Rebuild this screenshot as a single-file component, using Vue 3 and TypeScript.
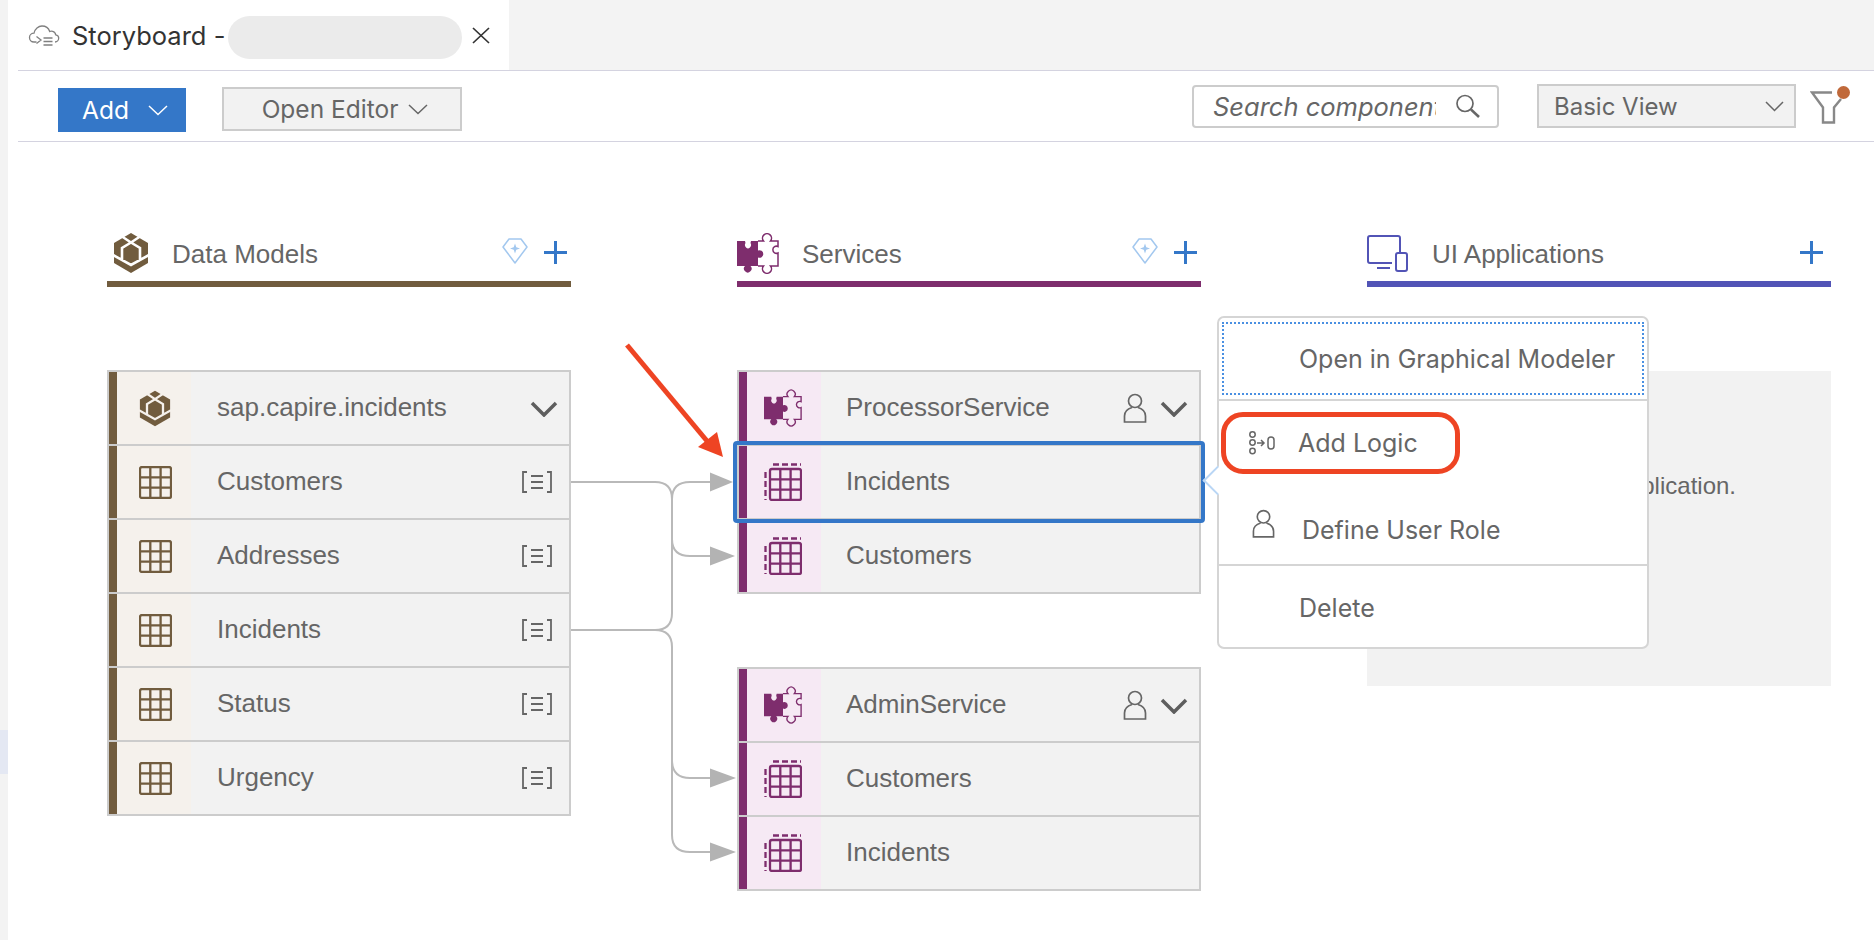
<script setup lang="ts">
interface Row {
  name: string;
  kind: 'head' | 'entity';
  user?: boolean;
  selected?: boolean;
}

const modelRows: Row[] = [
  { name: 'sap.capire.incidents', kind: 'head' },
  { name: 'Customers', kind: 'entity' },
  { name: 'Addresses', kind: 'entity' },
  { name: 'Incidents', kind: 'entity' },
  { name: 'Status', kind: 'entity' },
  { name: 'Urgency', kind: 'entity' },
];

const serviceTables: { gap: boolean; rows: Row[] }[] = [
  {
    gap: false,
    rows: [
      { name: 'ProcessorService', kind: 'head', user: true },
      { name: 'Incidents', kind: 'entity', selected: true },
      { name: 'Customers', kind: 'entity' },
    ],
  },
  {
    gap: true,
    rows: [
      { name: 'AdminService', kind: 'head', user: true },
      { name: 'Customers', kind: 'entity' },
      { name: 'Incidents', kind: 'entity' },
    ],
  },
];

const arrowHeads = [
  { y: 482, tip: 733 },
  { y: 556, tip: 735 },
  { y: 778, tip: 736 },
  { y: 852, tip: 736 },
];
</script>

<template>
  <div class="page">
    <svg width="0" height="0" class="defs">
      <defs>
        <symbol id="cube" viewBox="0 0 36 40">
          <path d="M18 0L35 10V30L18 40L1 30V10Z" fill="#715c3e" />
          <path d="M9 3.500L18 9.500L27 3.500M18 9.500L9 15V27M18 9.500L27 15V27M0 22L18 32L36 22" fill="none" stroke="currentColor" stroke-width="2.6" />
        </symbol>
        <symbol id="puzzle" viewBox="0 0 42 41">
          <path d="M0 8H8L8.5 10A3 3.5 0 1 0 13.5 10L14 8H21V17.500A3.800 3.800 0 1 1 21 24.500V33H13.500A3.800 3.800 0 1 1 8 33H0Z" fill="#7e2d6d" />
          <path d="M21 8H26.500A4.500 4.500 0 1 1 33.500 8H41V13.500A3.600 3.600 0 1 0 41 20V33H33.500A4.500 4.500 0 1 1 26.500 33H21" fill="none" stroke="#7e2d6d" stroke-width="1.5" />
        </symbol>
        <symbol id="person" viewBox="0 0 24 30">
          <circle cx="12" cy="8" r="6.5" fill="none" stroke="currentColor" stroke-width="1.7" />
          <path d="M9 14.500C4 16 1.500 19 1.500 23v6h21v-6c0-4-2.500-7-7.500-8.500" fill="none" stroke="currentColor" stroke-width="1.7" />
        </symbol>
        <symbol id="diamond" viewBox="0 0 26 26">
          <path d="M7 1h12l6 8-12 16L1 9z" fill="none" stroke="#a3c8ef" stroke-width="1.5" stroke-linejoin="round" />
          <path d="M13 5.500l1.300 3.700L18 10.500l-3.700 1.300L13 15.500l-1.300-3.700L8 10.500l3.700-1.300z" fill="#a3c8ef" />
        </symbol>
      </defs>
    </svg>

    <div class="side-strip"><span class="side-mark"></span></div>

    <div class="main">
      <header class="tabbar">
        <div class="tab">
          <svg class="cloud" width="32" height="22" viewBox="0 0 31 22" fill="none" stroke="#808080" stroke-width="1.3">
            <path d="M8 17H5.500C2.800 17 1 15 1 12.500S3 8.200 5.500 8.200C6.300 3.700 10 1 13.500 1c3.800 0 6.700 2.500 7.700 5.500 1-.500 2-.500 3-.200 1.800.500 2.800 2 3 3.500 1.800.300 3 1.500 3 3.300 0 2.200-1.700 3.900-3.700 3.900" />
            <path d="M8 11.500l4.500 3.500-4.500 3.500M15 13h9M15 16.500h9M15 20h9" />
          </svg>
          <span class="tab-title">Storyboard -</span>
          <span class="redacted"></span>
          <svg class="close" width="18" height="17" viewBox="0 0 18 17" stroke="#333" stroke-width="1.7">
            <path d="M1 1l16 15M17 1L1 16" />
          </svg>
        </div>
      </header>

      <div class="toolbar">
        <button class="btn btn-add">
          Add
          <svg width="20" height="11" viewBox="0 0 20 11" fill="none" stroke="#fff" stroke-width="1.5"><path d="M1 1l9 8.500L19 1" /></svg>
        </button>
        <button class="btn btn-editor">
          Open Editor
          <svg width="20" height="11" viewBox="0 0 20 11" fill="none" stroke="#666" stroke-width="1.5"><path d="M1 1l9 8.500L19 1" /></svg>
        </button>
        <div class="toolbar-right">
          <div class="search">
            <span class="search-text">Search components</span>
            <svg width="26" height="24" viewBox="0 0 26 24" fill="none" stroke="#666" stroke-width="1.7">
              <circle cx="10" cy="9.5" r="8" />
              <path d="M16 15.500l8 7.500" stroke-width="2.5" />
            </svg>
          </div>
          <div class="select">
            <span>Basic View</span>
            <svg width="19" height="11" viewBox="0 0 19 11" fill="none" stroke="#666" stroke-width="1.5"><path d="M1 1l8.500 8.500L18 1" /></svg>
          </div>
          <div class="filter">
            <svg width="33" height="33" viewBox="0 0 33 33" fill="none" stroke="#888" stroke-width="2.4">
              <path d="M22 1.500H2L13 16.500V31.500H24V16.500L31 8" />
            </svg>
            <span class="filter-dot"></span>
          </div>
        </div>
      </div>

      <div class="board">
        <section class="col">
          <div class="col-head head-model">
            <svg class="col-icon cube-plain" width="36" height="40"><use href="#cube" /></svg>
            <span class="col-title">Data Models</span>
            <svg class="gem" width="26" height="26"><use href="#diamond" /></svg>
            <span class="plus"></span>
          </div>
          <div class="table table-model">
            <div v-for="row in modelRows" :key="row.name" class="row">
              <div class="row-icon">
                <svg v-if="row.kind === 'head'" class="cube-tint" width="32" height="37"><use href="#cube" /></svg>
                <svg v-else width="33" height="33" viewBox="0 0 33 33" fill="none" stroke="#715c3e" stroke-width="2.3">
                  <rect x="1" y="1" width="31" height="31" rx="2" />
                  <path d="M11.300 1v31M21.600 1v31M1 11.300h31M1 21.600h31" />
                </svg>
              </div>
              <span class="row-name">{{ row.name }}</span>
              <svg v-if="row.kind === 'head'" class="chev" width="28" height="16" viewBox="0 0 28 16" fill="none" stroke="#5e5e5e" stroke-width="3.5"><path d="M2 2l12 12L26 2" /></svg>
              <svg v-else class="elements" width="32" height="22" viewBox="0 0 32 22" fill="none" stroke="#666" stroke-width="1.8">
                <path d="M6 1H2v20h4M26 1h4v20h-4M10 5h12M10 11h12M10 17h12" />
              </svg>
            </div>
          </div>
        </section>

        <section class="col">
          <div class="col-head head-service">
            <svg class="col-icon" width="42" height="41"><use href="#puzzle" /></svg>
            <span class="col-title">Services</span>
            <svg class="gem" width="26" height="26"><use href="#diamond" /></svg>
            <span class="plus"></span>
          </div>
          <div
            v-for="t in serviceTables"
            :key="t.rows[0].name"
            class="table table-service"
            :class="{ 'table-gap': t.gap }"
          >
            <div
              v-for="row in t.rows"
              :key="row.name"
              class="row"
              :class="{ selected: row.selected }"
            >
              <div class="row-icon">
                <svg v-if="row.kind === 'head'" width="38" height="38"><use href="#puzzle" /></svg>
                <svg v-else width="38" height="38" viewBox="0 0 38 38" fill="none" stroke="#7e2d6d" stroke-width="2.3">
                  <rect x="6" y="6" width="31" height="31" rx="2" />
                  <path d="M16.300 6v31M26.600 6v31M6 16.300h31M6 26.600h31" />
                  <path d="M9 1.500h28M1.500 9v28" stroke-dasharray="6 3" />
                </svg>
              </div>
              <span class="row-name">{{ row.name }}</span>
              <svg v-if="row.user" class="user" width="24" height="30" color="#666"><use href="#person" /></svg>
              <svg v-if="row.user" class="chev" width="28" height="16" viewBox="0 0 28 16" fill="none" stroke="#5e5e5e" stroke-width="3.5"><path d="M2 2l12 12L26 2" /></svg>
            </div>
          </div>
        </section>

        <section class="col">
          <div class="col-head head-ui">
            <svg class="col-icon" width="41" height="37" viewBox="0 0 41 37" fill="none" stroke="#5254b6" stroke-width="2">
              <path d="M25 28H3a2 2 0 0 1-2-2V3a2 2 0 0 1 2-2h28a2 2 0 0 1 2 2v14" />
              <path d="M10 33h13" />
              <rect x="29" y="18" width="11" height="18" rx="2" />
            </svg>
            <span class="col-title">UI Applications</span>
            <span class="plus"></span>
          </div>
          <div class="empty-panel">
            <span>No UI application.</span>
          </div>
        </section>

        <svg class="links" width="1874" height="798" viewBox="0 142 1874 798" fill="none">
          <path
            d="M571 482H655Q672 482 672 499V613Q672 630 655 630H571M655 630Q672 630 672 647V835Q672 852 690 852H712M672 760Q672 778 690 778H712M672 499Q672 482 690 482H712M672 539Q672 556 690 556H712"
            stroke="#b9b9b9"
            stroke-width="2"
          />
          <path
            v-for="a in arrowHeads"
            :key="a.y"
            :d="`M710 ${a.y - 9.5}L${a.tip} ${a.y}L710 ${a.y + 9.5}Z`"
            fill="#b3b3b3"
          />
          <path d="M627 345L712 447" stroke="#ee4423" stroke-width="5" />
          <path d="M723 457L698 447L717 432Z" fill="#ee4423" />
        </svg>

        <div class="menu">
          <span class="menu-pointer"></span>
          <div class="menu-item item-focus">Open in Graphical Modeler</div>
          <div class="menu-group">
            <div class="menu-item item-logic">
              <svg class="logic-icon" width="26" height="24" viewBox="0 0 26 24" fill="none" stroke="#666" stroke-width="1.5">
                <circle cx="3.5" cy="3.5" r="2.7" />
                <circle cx="3.5" cy="11.5" r="2.7" />
                <circle cx="3.5" cy="20" r="2.7" />
                <path d="M8 12h7M12 9l3 3-3 3" />
                <rect x="19" y="6" width="6" height="12" rx="3" />
              </svg>
              <span>Add Logic</span>
            </div>
            <div class="menu-item item-role">
              <svg class="role-icon" width="23" height="29" color="#666"><use href="#person" /></svg>
              <span>Define User Role</span>
            </div>
          </div>
          <div class="menu-item item-delete">Delete</div>
        </div>
      </div>
    </div>
  </div>
</template>

<style>
html,
body {
  margin: 0;
  background: #fff;
  overflow: hidden;
}
</style>

<style scoped>
.page {
  width: 1874px;
  height: 940px;
  display: flex;
  font-family: Inter, "Liberation Sans", sans-serif;
  color: #666;
  position: relative;
  overflow: hidden;
}

.defs {
  position: absolute;
}

.side-strip {
  width: 8px;
  flex-shrink: 0;
  background: #f3f3f3;
  padding-top: 730px;
  box-sizing: border-box;
}

.side-mark {
  display: block;
  height: 44px;
  background: #e4e8f3;
}

.main {
  flex: 1;
  min-width: 0;
}

.tabbar {
  height: 71px;
  background: #f3f3f3;
  box-shadow: inset 0 -1px 0 #d4d3e0;
}

.tab {
  width: 501px;
  height: 71px;
  background: #fff;
  box-sizing: border-box;
  padding-left: 20px;
  display: flex;
  align-items: center;
  position: relative;
}

.tab::after {
  content: "";
  position: absolute;
  left: 10px;
  right: 0;
  bottom: 0;
  height: 1px;
  background: #d4d3e0;
}

.tab-title {
  font-size: 25.5px;
  color: #333;
  margin-left: 12px;
  white-space: nowrap;
}

.redacted {
  width: 234px;
  height: 43px;
  border-radius: 22px;
  background: #ebebeb;
  margin-left: 3px;
  margin-top: 4px;
}

.close {
  margin-left: 10px;
}

.toolbar {
  height: 71px;
  box-sizing: border-box;
  display: flex;
  align-items: center;
  margin-left: 10px;
  padding: 8px 31px 0 40px;
  border-bottom: 1px solid #d4d3e0;
}

.btn {
  font-family: inherit;
  font-size: 24.5px;
  height: 44px;
  padding: 0;
  display: flex;
  align-items: center;
  justify-content: center;
  border-radius: 0;
}

.btn-add {
  width: 128px;
  gap: 19px;
  padding-left: 6px;
  box-sizing: border-box;
  background: #3477c8;
  color: #fff;
  border: none;
}

.btn-editor {
  margin-left: 36px;
  margin-top: -2px;
  width: 240px;
  gap: 10px;
  padding-left: 6px;
  background: #f2f2f2;
  color: #666;
  border: 2px solid #ccc;
  box-sizing: border-box;
}

.toolbar-right {
  margin-left: auto;
  margin-top: -8px;
  display: flex;
  align-items: center;
}

.search {
  width: 307px;
  height: 43px;
  box-sizing: border-box;
  border: 2px solid #ccc;
  border-radius: 4px;
  display: flex;
  align-items: center;
  padding: 0 16px 0 19px;
}

.search-text {
  flex: 1;
  min-width: 0;
  overflow: hidden;
  white-space: nowrap;
  font-style: italic;
  font-size: 25.5px;
  margin-right: 19px;
}

.select {
  margin-left: 38px;
  width: 259px;
  height: 44px;
  box-sizing: border-box;
  border: 2px solid #ccc;
  background: #f2f2f2;
  display: flex;
  align-items: center;
  justify-content: space-between;
  padding: 0 10px 0 15px;
  font-size: 24px;
}

.filter {
  position: relative;
  margin-left: 14px;
  width: 33px;
  height: 33px;
  margin-top: 2px;
}

.filter-dot {
  position: absolute;
  top: -5px;
  left: 27px;
  width: 13px;
  height: 13px;
  border-radius: 50%;
  background: #c0693a;
}

.board {
  position: relative;
  display: grid;
  grid-template-columns: repeat(3, 464px);
  column-gap: 166px;
  margin-left: -8px;
  padding: 91px 0 0 107px;
  align-items: start;
}

.links {
  position: absolute;
  left: 0;
  top: 0;
  pointer-events: none;
}

.col-head {
  height: 54px;
  box-sizing: border-box;
  border-bottom: 6px solid;
  display: flex;
  align-items: flex-start;
  position: relative;
  font-family: "Liberation Sans", sans-serif;
  font-size: 26px;
}

.head-model {
  border-color: #715c3e;
}

.head-service {
  border-color: #7e2d6d;
}

.head-ui {
  border-color: #5254b6;
}

.col-icon {
  flex-shrink: 0;
}

.cube-plain {
  color: #fff;
}

.cube-tint {
  color: #f5f1ec;
}

.head-model .col-icon {
  margin-left: 6px;
}

.head-ui .col-icon {
  margin-top: 2px;
}

.col-title {
  margin-top: 6px;
  line-height: 30px;
}

.head-model .col-title {
  margin-left: 23px;
}

.head-service .col-title {
  margin-left: 23px;
}

.head-ui .col-title {
  margin-left: 24px;
}

.gem {
  margin-left: auto;
  margin-top: 5px;
  margin-right: 16px;
}

.plus {
  width: 23px;
  height: 23px;
  flex-shrink: 0;
  margin-top: 8px;
  margin-right: 4px;
  background:
    linear-gradient(#3477c8, #3477c8) center / 100% 3px no-repeat,
    linear-gradient(#3477c8, #3477c8) center / 3px 100% no-repeat;
}

.head-ui .plus {
  margin-left: auto;
  margin-right: 8px;
}

.table {
  margin-top: 83px;
  border: 2px solid #ccc;
  display: flex;
  flex-direction: column;
  gap: 2px;
  background: #ccc;
  font-family: "Liberation Sans", sans-serif;
  font-size: 26px;
}

.table-gap {
  margin-top: 73px;
}

.row {
  height: 72px;
  background: #f2f2f2;
  display: flex;
  align-items: center;
  padding-right: 16px;
  position: relative;
}

.row-icon {
  align-self: stretch;
  flex-shrink: 0;
  width: 82px;
  margin-right: 26px;
  box-sizing: border-box;
  display: flex;
  align-items: center;
  justify-content: center;
}

.table-model .row-icon {
  background: #f5f1ec;
  border-left: 8px solid #715c3e;
  padding-left: 2px;
}

.table-service .row-icon {
  background: #f6e9f4;
  border-left: 8px solid #7e2d6d;
  padding-right: 2px;
  margin-right: 25px;
}

.row-name {
  flex: 1;
  line-height: 30px;
  margin-top: -3px;
  white-space: nowrap;
}

.chev {
  margin-top: 2px;
  margin-right: -5px;
}

.user {
  margin-right: 13px;
}

.selected {
  z-index: 1;
}

.selected::after {
  content: "";
  position: absolute;
  left: -6px;
  right: -6px;
  top: -5px;
  bottom: -5px;
  border: 4px solid #3477c8;
  border-radius: 4px;
  pointer-events: none;
}

.empty-panel {
  margin-top: 84px;
  height: 315px;
  background: #f2f2f2;
  font-family: "Liberation Sans", sans-serif;
  font-size: 24px;
  display: flex;
  justify-content: flex-end;
  padding: 101px 95px 0 0;
  box-sizing: border-box;
}

.menu {
  position: absolute;
  z-index: 2;
  left: 1217px;
  top: 174px;
  width: 432px;
  height: 333px;
  box-sizing: border-box;
  background: #fff;
  border: 2px solid #d5d5d5;
  border-radius: 7px;
  font-size: 25px;
  color: #666;
}

.menu-pointer {
  position: absolute;
  z-index: -1;
  left: -12.5px;
  top: 151.5px;
  width: 21px;
  height: 21px;
  transform: rotate(45deg);
  background: #fff;
  border-left: 2px solid #b9d6f5;
  border-bottom: 2px solid #b9d6f5;
  box-sizing: border-box;
}

.menu-item {
  display: flex;
  align-items: center;
  position: relative;
}

.item-focus {
  margin: 4px 3px 0;
  height: 73px;
  border: 2px dotted #4a90e2;
  box-sizing: border-box;
  padding-left: 75px;
}

.menu-group {
  margin-top: 4px;
  border-top: 2px solid #d5d5d5;
  border-bottom: 2px solid #d5d5d5;
  height: 167px;
  box-sizing: border-box;
  padding: 11px 0 0 2px;
}

.item-logic {
  width: 239px;
  height: 62px;
  box-sizing: border-box;
  border: 5px solid #ee4423;
  border-radius: 22px;
  padding-left: 23px;
  margin-bottom: 40px;
}

.logic-icon {
  margin-right: 23px;
}

.item-role {
  padding-left: 31px;
  height: 32px;
}

.role-icon {
  margin-right: 27px;
  margin-top: -13px;
}

.item-delete {
  height: 84px;
  padding-left: 80px;
}
</style>
